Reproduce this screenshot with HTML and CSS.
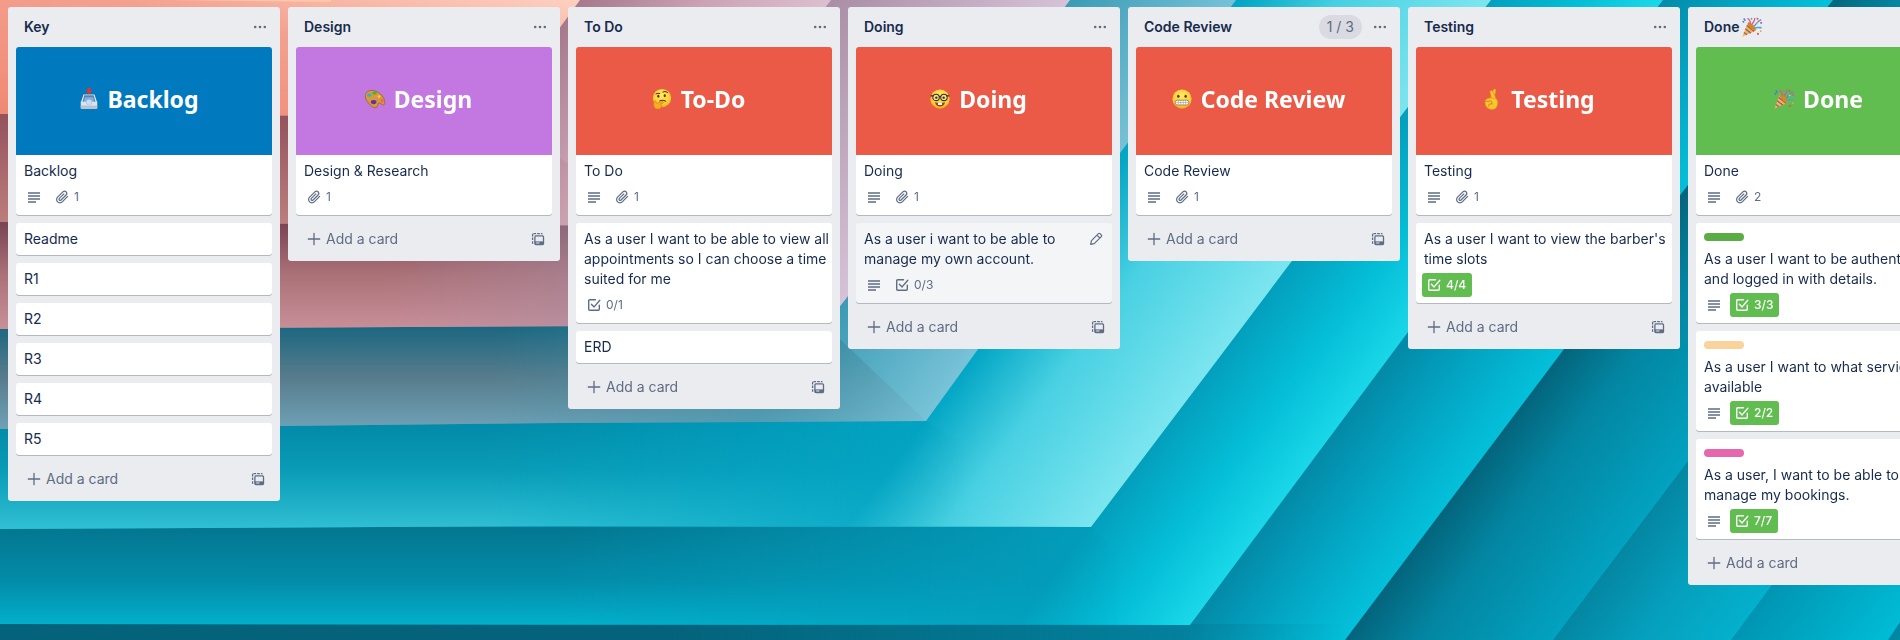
FILE: index.html
```html
<!DOCTYPE html>
<html lang="en">
<head>
<meta charset="utf-8">
<meta name="viewport" content="width=device-width, initial-scale=1">
<title>Board</title>
<link rel="stylesheet" href="styles.css">
</head>
<body>
<svg class="backdrop" viewBox="0 0 1900 640" preserveAspectRatio="xMinYMin slice" aria-hidden="true">
  <defs>
    <linearGradient id="gG" gradientUnits="userSpaceOnUse" x1="1888" y1="640" x2="1980" y2="709"><stop offset="0" stop-color="#0086a2"/><stop offset="1" stop-color="#00a6c4"/></linearGradient>
    <linearGradient id="gF" gradientUnits="userSpaceOnUse" x1="1731" y1="640" x2="1832" y2="716"><stop offset="0" stop-color="#0095b2"/><stop offset="1" stop-color="#00bcd6"/></linearGradient>
    <linearGradient id="gE" gradientUnits="userSpaceOnUse" x1="1553" y1="640" x2="1667" y2="725"><stop offset="0" stop-color="#0486a2"/><stop offset=".5" stop-color="#05a0be"/><stop offset="1" stop-color="#04b0cc"/></linearGradient>
    <linearGradient id="gD" gradientUnits="userSpaceOnUse" x1="1345" y1="640" x2="1478" y2="740"><stop offset="0" stop-color="#04647c"/><stop offset=".35" stop-color="#0385a1"/><stop offset="1" stop-color="#02a2c0"/></linearGradient>
    <linearGradient id="gC" gradientUnits="userSpaceOnUse" x1="1190" y1="625" x2="1296" y2="705"><stop offset="0" stop-color="#038aa8"/><stop offset=".5" stop-color="#03a6c4"/><stop offset="1" stop-color="#04c0da"/></linearGradient>
    <linearGradient id="gB" gradientUnits="userSpaceOnUse" x1="1091" y1="527" x2="1201" y2="610"><stop offset="0" stop-color="#039fbd"/><stop offset=".55" stop-color="#05bfd8"/><stop offset="1" stop-color="#1ad8e9"/></linearGradient>
    <linearGradient id="gA" gradientUnits="userSpaceOnUse" x1="926" y1="421" x2="1082" y2="538"><stop offset="0" stop-color="#03a6c5"/><stop offset=".4" stop-color="#48d0e2"/><stop offset="1" stop-color="#7be5ef"/></linearGradient>
    <linearGradient id="gP" gradientUnits="userSpaceOnUse" x1="825" y1="325" x2="936" y2="408"><stop offset="0" stop-color="#3a9bb4"/><stop offset="1" stop-color="#78c3d8"/></linearGradient>
    <linearGradient id="gM" gradientUnits="userSpaceOnUse" x1="660" y1="226" x2="813" y2="341"><stop offset="0" stop-color="#a98ea5"/><stop offset="1" stop-color="#d6c2d8"/></linearGradient>
    <linearGradient id="gS" gradientUnits="userSpaceOnUse" x1="495" y1="116" x2="653" y2="235"><stop offset="0" stop-color="#a67a8c"/><stop offset=".5" stop-color="#cba3b5"/><stop offset="1" stop-color="#dcbfd0"/></linearGradient>
    <linearGradient id="gI" x1="0" y1="1" x2="1" y2="0"><stop offset="0" stop-color="#f08872"/><stop offset=".6" stop-color="#f4a08f"/><stop offset="1" stop-color="#fdd0c0"/></linearGradient>

    <linearGradient id="b1" x1="0" y1="0" x2="0" y2="1"><stop offset="0" stop-color="#94525b"/><stop offset="1" stop-color="#bd7f7f"/></linearGradient>
    <linearGradient id="b2" x1="0" y1="0" x2="0" y2="1"><stop offset="0" stop-color="#7a4354"/><stop offset=".5" stop-color="#ab7278"/><stop offset="1" stop-color="#c98f99"/></linearGradient>
    <linearGradient id="b3" x1="0" y1="0" x2="0" y2="1"><stop offset="0" stop-color="#1a6680"/><stop offset=".5" stop-color="#577c8c"/><stop offset="1" stop-color="#6fa1b6"/></linearGradient>
    <linearGradient id="b4" x1="0" y1="0" x2="0" y2="1"><stop offset="0" stop-color="#0289a7"/><stop offset=".45" stop-color="#0a9bb6"/><stop offset="1" stop-color="#2fc0d4"/></linearGradient>
    <linearGradient id="b5" x1="0" y1="0" x2="0" y2="1"><stop offset="0" stop-color="#047690"/><stop offset=".55" stop-color="#038ca9"/><stop offset="1" stop-color="#02b0cc"/></linearGradient>

    <linearGradient id="fade" x1="0" y1="0" x2="1" y2="0"><stop offset=".5" stop-color="#fff"/><stop offset="1" stop-color="#000"/></linearGradient>
    <mask id="m1"><rect width="620" height="640" fill="url(#fade)"/></mask>
    <mask id="m2"><rect width="780" height="640" fill="url(#fade)"/></mask>
    <mask id="m3"><rect width="1000" height="640" fill="url(#fade)"/></mask>
    <mask id="m4"><rect width="970" height="640" fill="url(#fade)"/></mask>
    <mask id="m5"><rect width="1120" height="640" fill="url(#fade)"/></mask>
    <mask id="m6"><rect width="1345" height="640" fill="url(#fade)"/></mask>
  </defs>
  <rect width="1900" height="640" fill="url(#gG)"/>
  <path fill="url(#gF)" d="M0 0H1900V622L1888 640H0Z"/>
  <path fill="url(#gE)" d="M0 0H1900V412L1731 640H0Z"/>
  <path fill="url(#gD)" d="M0 0H1900V180L1553 640H0Z"/>
  <path fill="url(#gC)" d="M0 0H1833L1684 190L1564 349L1345 640H0Z"/>
  <path fill="#04637b" mask="url(#m6)" d="M0 624H1345V640H0Z"/>
  <path fill="url(#gB)" d="M0 0H1663L1408 332L1190 625L0 624Z"/>
  <path fill="url(#b5)" mask="url(#m5)" d="M0 527H1091L1190 625L0 624Z"/>
  <path fill="url(#gA)" d="M0 0H1491L1404 112L1240 330L1091 527L560 526L0 529Z"/>
  <path fill="url(#b4)" mask="url(#m4)" d="M0 421H926L1091 527L560 526L0 529Z"/>
  <path fill="url(#gP)" d="M0 0H1236L1120 153L926 421L560 423L0 429Z"/>
  <path fill="url(#b3)" mask="url(#m3)" d="M0 325H825L926 421L560 423L0 429Z"/>
  <path fill="url(#gM)" d="M0 0H1070L845 300L825 325L0 329Z"/>
  <path fill="url(#b2)" mask="url(#m2)" d="M0 222H662L825 325L0 329Z"/>
  <path fill="url(#gS)" d="M0 0H831L660 226L0 222Z"/>
  <path fill="url(#b1)" mask="url(#m1)" d="M0 114H495L660 226L0 222Z"/>
  <path fill="url(#gI)" d="M0 0H580L495 117L0 114Z"/>
  <path fill="#fdc9ab" d="M170 0H331V2Z"/>
</svg>

<svg class="sprite" aria-hidden="true">
  <symbol id="i-dots" viewBox="0 0 16 16"><g fill="currentColor"><circle cx="3.2" cy="8" r="1.3"/><circle cx="8" cy="8" r="1.3"/><circle cx="12.8" cy="8" r="1.3"/></g></symbol>
  <symbol id="i-plus" viewBox="0 0 16 16"><path d="M8 2.3v11.4M2.3 8h11.4" stroke="currentColor" stroke-width="1.3" stroke-linecap="round"/></symbol>
  <symbol id="i-desc" viewBox="0 0 16 16"><path d="M2 4h12M2 7h12M2 10h12M2 13h8" stroke="currentColor" stroke-width="1.3"/></symbol>
  <symbol id="i-clip" viewBox="0 0 16 16"><path d="M13.600 7.400 8.300 12.800a3.300 3.300 0 0 1-4.700 0 3.300 3.300 0 0 1 0-4.700L8.900 2.800a2.300 2.300 0 0 1 3.200 0 2.300 2.300 0 0 1 0 3.200l-5 5a1.200 1.200 0 0 1-1.700 0 1.200 1.200 0 0 1 0-1.700l4.500-4.500" fill="none" stroke="currentColor" stroke-width="1.200" stroke-linecap="round" stroke-linejoin="round"/></symbol>
  <symbol id="i-check" viewBox="0 0 16 16"><path d="M9.500 2.700H3.700a1 1 0 0 0-1 1v8.600a1 1 0 0 0 1 1h8.600a1 1 0 0 0 1-1V8.300M5.400 7.200l2.700 2.700 5.700-6.600" fill="none" stroke="currentColor" stroke-width="1.400" stroke-linecap="round" stroke-linejoin="round"/></symbol>
  <symbol id="i-template" viewBox="0 0 16 16"><g fill="none" stroke="currentColor" stroke-width="1.300"><path d="M2.600 12.800V2.600H12.500" stroke-dasharray="2.600 1.100"/><rect x="4.900" y="4.900" width="8.600" height="8.600" rx="1"/></g><path fill="currentColor" d="M4.900 10.400h8.600v3.100H4.900z"/><path fill="#ebecf0" d="M6.200 11.500h3.200v1H6.200z"/></symbol>
  <symbol id="i-pencil" viewBox="0 0 16 16"><path d="M2.700 13.300l.6-3.500 7.100-7.100a1.100 1.100 0 0 1 1.600 0l1.300 1.300a1.100 1.100 0 0 1 0 1.600l-7.100 7.100ZM9 4.200 11.800 7" fill="none" stroke="currentColor" stroke-width="1.200" stroke-linejoin="round"/></symbol>

  <symbol id="e-inbox" viewBox="0 0 24 24">
    <path d="M6 7h12l3 9H3Z" fill="#e9eff6"/><path d="M6.800 8h10.400l2.200 8H4.600Z" fill="#5583b8"/><path d="M7.500 10h9l1.500 6H6Z" fill="#86aedb"/>
    <path d="M3 15h5.500c.4 2.200 1.700 3.200 3.500 3.200s3.100-1 3.500-3.200H21v6.500a1 1 0 0 1-1 1H4a1 1 0 0 1-1-1Z" fill="#dde3ea"/><path d="M3 19h18v2.500a1 1 0 0 1-1 1H4a1 1 0 0 1-1-1Z" fill="#b9c3cf"/><circle cx="12" cy="15.500" r="3" fill="#c6def7"/>
    <path d="M10.300 0h3.400v3h2.200L12 7 8.100 3h2.200Z" fill="#e2352c"/>
  </symbol>
  <symbol id="e-palette" viewBox="0 0 24 24">
    <path d="M2 6C4 2 11 1.500 16 5c5 3.500 7.500 9 6.500 12.500-1 2.500-3.500-.5-5.500-1-2.500-.5-1.500 3-3 4.500-2.500 1.500-7-1.500-9.500-5S.5 9.500 2 6Z" fill="#d69a3a" stroke="#96621f" stroke-width=".8"/>
    <ellipse cx="5.600" cy="7.800" rx="2.300" ry="1.800" fill="#28b4d8"/><ellipse cx="11.600" cy="5.500" rx="2.400" ry="1.700" fill="#31b83e"/><ellipse cx="16.400" cy="9.300" rx="1.500" ry="1.300" fill="#e9d04a"/><ellipse cx="19.800" cy="13.800" rx="1.700" ry="2.200" fill="#ee6a4b"/><ellipse cx="10.500" cy="15.300" rx="3.100" ry="2.300" fill="#6a2f9c"/><ellipse cx="14.500" cy="13.200" rx="1.300" ry="1.100" fill="#c476e0"/>
  </symbol>
  <radialGradient id="face" cx=".5" cy=".35" r=".7"><stop offset="0" stop-color="#ffec63"/><stop offset=".7" stop-color="#fdca33"/><stop offset="1" stop-color="#e8981a"/></radialGradient>
  <symbol id="e-think" viewBox="0 0 24 24">
    <circle cx="12" cy="11" r="10" fill="url(#face)"/><ellipse cx="8" cy="9" rx="1.200" ry="1.600" fill="#5a3512"/><ellipse cx="15" cy="8.500" rx="1.200" ry="1.600" fill="#5a3512"/>
    <path d="M5.500 6.500c1-.8 2.500-1 4-.5M13 4.500c1.500-1 3.500-.8 5 .7M9.500 14.200c2-1 4.500-.9 6.500.2" fill="none" stroke="#5a3512" stroke-width="1.100" stroke-linecap="round"/>
    <path d="M4 14c1.300-.4 1.800.8 1.800 2.800l6.400-2c1.700-.4 2 1.500.6 2l-2.500.9c2.200.5 1.500 5.300-2.800 5.300C4 23 3 20.500 3 18.500 3 16.500 3 14.500 4 14Z" fill="#f7ac28" stroke="#d07b13" stroke-width=".6"/>
  </symbol>
  <symbol id="e-nerd" viewBox="0 0 24 24">
    <circle cx="12" cy="12" r="10.500" fill="url(#face)"/><g fill="#f6e6a4" stroke="#3b2b1c" stroke-width="1.200"><circle cx="7.700" cy="10.300" r="3.500"/><circle cx="16.300" cy="10.300" r="3.500"/></g><path d="M1.800 8.500h3M19.200 8.500h3M11 9.500h2" stroke="#3b2b1c" stroke-width="1.300"/><circle cx="8" cy="10.500" r="1.300" fill="#4b2b10"/><circle cx="16" cy="10.500" r="1.300" fill="#4b2b10"/><path d="M6.500 15.500c3 1.200 8 1.200 11 0-.7 3.500-3 4.700-5.500 4.700s-4.800-1.200-5.500-4.700Z" fill="#8a4a18"/><path d="M9.800 16.200h4.400v2.300H9.800Z" fill="#fff"/>
  </symbol>
  <symbol id="e-grimace" viewBox="0 0 24 24">
    <circle cx="12" cy="12" r="10.500" fill="url(#face)"/><ellipse cx="8" cy="9" rx="1.300" ry="1.700" fill="#5a3512"/><ellipse cx="16" cy="9" rx="1.300" ry="1.700" fill="#5a3512"/><rect x="4.500" y="13.300" width="15" height="5.200" rx="2.400" fill="#fff" stroke="#8c7a66" stroke-width=".9"/><path d="M5 15.900h14M8 13.500v4.800M10.700 13.500v4.800M13.300 13.500v4.800M16 13.500v4.800" stroke="#9c9285" stroke-width=".6"/>
  </symbol>
  <symbol id="e-fingers" viewBox="0 0 24 24">
    <g fill="#fcc52f" stroke="#d8901a" stroke-width=".7"><path d="M9.500 13 13.500 2c.6-1.600 3-1 2.700.7L14 13Z"/><path d="M12 13 9.800 4.300c-.3-1.700 2.100-2.400 2.800-.8L17 12.500Z"/><path d="M5.500 12.500c2-1.700 5-1.700 8.500-1.200 3.500.4 4.500 2 4.300 5-.2 4-2.300 7.200-6.300 7.200-4.500 0-7-3-7.500-6.500-.2-2 0-3.500 1-4.500Z"/><path d="M5 15.200c1-1.300 2.800-1 3.300.3M8.300 14.500c.9-1 2.600-.8 3 .5l1 2.500c-2.300-.7-4 .5-4.300 2.500" fill="none" stroke-width="1.100"/></g>
  </symbol>
  <symbol id="e-party" viewBox="0 0 24 24">
    <path d="M1.500 22.500 7.500 7c3 1.500 7 5.500 8.500 9Z" fill="#f5bd2e"/><path d="M3.200 18l3.400 2.400M4.700 14l6 4.700M6.300 10.200l8 6.600" stroke="#9a55b8" stroke-width="1.500"/><ellipse cx="11.800" cy="11.500" rx="2.300" ry="6" transform="rotate(-43 11.800 11.500)" fill="#d38a18"/>
    <path d="M10 9C11 6 9 4 7 2.500M12.500 9c.5-3.500 3-3 2.500-7" fill="none" stroke="#d655a5" stroke-width="1.400"/><path d="M14.500 11c3-3.500 3.500-5.500 7.500-7" fill="none" stroke="#4a8fdc" stroke-width="1.500"/><path d="M15 13.500c2.500-2 4.500-.2 7.500-1" fill="none" stroke="#3fa6e8" stroke-width="1.700"/><path d="M3 2.500l1.800 2.700M1.800 5.500l1.500 1.700" stroke="#4a78d8" stroke-width="1.500"/><circle cx="18" cy="3" r="1.100" fill="#e8524a"/><circle cx="22" cy="7.500" r="1.100" fill="#d655a5"/><circle cx="11.500" cy="3" r="1" fill="#59b84a"/><circle cx="18.500" cy="19.500" r="1.100" fill="#e8524a"/><circle cx="21.500" cy="16.500" r="1" fill="#f2a33a"/><circle cx="18" cy="8" r="1" fill="#f5cf3c"/>
  </symbol>
</svg>

<main class="board">
  <section class="list">
    <header class="list-header"><h2>Key</h2><button class="icon-button" aria-label="List actions"><svg class="icon"><use href="#i-dots"/></svg></button></header>
    <ul class="cards">
      <li class="card">
        <div class="cover blue"><svg class="emoji"><use href="#e-inbox"/></svg><span>Backlog</span></div>
        <div class="card-body"><p class="title">Backlog</p>
          <div class="badges"><span class="badge"><svg class="icon"><use href="#i-desc"/></svg></span><span class="badge"><svg class="icon"><use href="#i-clip"/></svg><span>1</span></span></div></div>
      </li>
      <li class="card"><div class="card-body"><p class="title">Readme</p></div></li>
      <li class="card"><div class="card-body"><p class="title">R1</p></div></li>
      <li class="card"><div class="card-body"><p class="title">R2</p></div></li>
      <li class="card"><div class="card-body"><p class="title">R3</p></div></li>
      <li class="card"><div class="card-body"><p class="title">R4</p></div></li>
      <li class="card"><div class="card-body"><p class="title">R5</p></div></li>
    </ul>
    <footer class="list-footer"><button class="add"><svg class="icon"><use href="#i-plus"/></svg>Add a card</button><button class="icon-button" aria-label="Create from template"><svg class="icon"><use href="#i-template"/></svg></button></footer>
  </section>

  <section class="list">
    <header class="list-header"><h2>Design</h2><button class="icon-button" aria-label="List actions"><svg class="icon"><use href="#i-dots"/></svg></button></header>
    <ul class="cards">
      <li class="card">
        <div class="cover purple"><svg class="emoji"><use href="#e-palette"/></svg><span>Design</span></div>
        <div class="card-body"><p class="title">Design &amp; Research</p>
          <div class="badges"><span class="badge"><svg class="icon"><use href="#i-clip"/></svg><span>1</span></span></div></div>
      </li>
    </ul>
    <footer class="list-footer"><button class="add"><svg class="icon"><use href="#i-plus"/></svg>Add a card</button><button class="icon-button" aria-label="Create from template"><svg class="icon"><use href="#i-template"/></svg></button></footer>
  </section>

  <section class="list">
    <header class="list-header"><h2>To Do</h2><button class="icon-button" aria-label="List actions"><svg class="icon"><use href="#i-dots"/></svg></button></header>
    <ul class="cards">
      <li class="card">
        <div class="cover red"><svg class="emoji"><use href="#e-think"/></svg><span>To-Do</span></div>
        <div class="card-body"><p class="title">To Do</p>
          <div class="badges"><span class="badge"><svg class="icon"><use href="#i-desc"/></svg></span><span class="badge"><svg class="icon"><use href="#i-clip"/></svg><span>1</span></span></div></div>
      </li>
      <li class="card"><div class="card-body"><p class="title">As a user I want to be able to view all appointments so I can choose a time suited for me</p>
        <div class="badges"><span class="badge"><svg class="icon"><use href="#i-check"/></svg><span>0/1</span></span></div></div></li>
      <li class="card"><div class="card-body"><p class="title">ERD</p></div></li>
    </ul>
    <footer class="list-footer"><button class="add"><svg class="icon"><use href="#i-plus"/></svg>Add a card</button><button class="icon-button" aria-label="Create from template"><svg class="icon"><use href="#i-template"/></svg></button></footer>
  </section>

  <section class="list">
    <header class="list-header"><h2>Doing</h2><button class="icon-button" aria-label="List actions"><svg class="icon"><use href="#i-dots"/></svg></button></header>
    <ul class="cards">
      <li class="card">
        <div class="cover red"><svg class="emoji"><use href="#e-nerd"/></svg><span>Doing</span></div>
        <div class="card-body"><p class="title">Doing</p>
          <div class="badges"><span class="badge"><svg class="icon"><use href="#i-desc"/></svg></span><span class="badge"><svg class="icon"><use href="#i-clip"/></svg><span>1</span></span></div></div>
      </li>
      <li class="card hovered"><button class="edit" aria-label="Edit card"><svg class="icon"><use href="#i-pencil"/></svg></button>
        <div class="card-body"><p class="title">As a user i want to be able to manage my own account.</p>
        <div class="badges"><span class="badge"><svg class="icon"><use href="#i-desc"/></svg></span><span class="badge"><svg class="icon"><use href="#i-check"/></svg><span>0/3</span></span></div></div></li>
    </ul>
    <footer class="list-footer"><button class="add"><svg class="icon"><use href="#i-plus"/></svg>Add a card</button><button class="icon-button" aria-label="Create from template"><svg class="icon"><use href="#i-template"/></svg></button></footer>
  </section>

  <section class="list">
    <header class="list-header"><h2>Code Review</h2><span class="limit">1 / 3</span><button class="icon-button" aria-label="List actions"><svg class="icon"><use href="#i-dots"/></svg></button></header>
    <ul class="cards">
      <li class="card">
        <div class="cover red"><svg class="emoji"><use href="#e-grimace"/></svg><span>Code Review</span></div>
        <div class="card-body"><p class="title">Code Review</p>
          <div class="badges"><span class="badge"><svg class="icon"><use href="#i-desc"/></svg></span><span class="badge"><svg class="icon"><use href="#i-clip"/></svg><span>1</span></span></div></div>
      </li>
    </ul>
    <footer class="list-footer"><button class="add"><svg class="icon"><use href="#i-plus"/></svg>Add a card</button><button class="icon-button" aria-label="Create from template"><svg class="icon"><use href="#i-template"/></svg></button></footer>
  </section>

  <section class="list">
    <header class="list-header"><h2>Testing</h2><button class="icon-button" aria-label="List actions"><svg class="icon"><use href="#i-dots"/></svg></button></header>
    <ul class="cards">
      <li class="card">
        <div class="cover red"><svg class="emoji"><use href="#e-fingers"/></svg><span>Testing</span></div>
        <div class="card-body"><p class="title">Testing</p>
          <div class="badges"><span class="badge"><svg class="icon"><use href="#i-desc"/></svg></span><span class="badge"><svg class="icon"><use href="#i-clip"/></svg><span>1</span></span></div></div>
      </li>
      <li class="card"><div class="card-body"><p class="title">As a user I want to view the barber's time slots</p>
        <div class="badges"><span class="badge complete"><svg class="icon"><use href="#i-check"/></svg><span>4/4</span></span></div></div></li>
    </ul>
    <footer class="list-footer"><button class="add"><svg class="icon"><use href="#i-plus"/></svg>Add a card</button><button class="icon-button" aria-label="Create from template"><svg class="icon"><use href="#i-template"/></svg></button></footer>
  </section>

  <section class="list">
    <header class="list-header"><h2>Done <svg class="emoji"><use href="#e-party"/></svg></h2><button class="icon-button" aria-label="List actions"><svg class="icon"><use href="#i-dots"/></svg></button></header>
    <ul class="cards">
      <li class="card">
        <div class="cover green"><svg class="emoji"><use href="#e-party"/></svg><span>Done</span></div>
        <div class="card-body"><p class="title">Done</p>
          <div class="badges"><span class="badge"><svg class="icon"><use href="#i-desc"/></svg></span><span class="badge"><svg class="icon"><use href="#i-clip"/></svg><span>2</span></span></div></div>
      </li>
      <li class="card"><div class="card-body"><span class="label label-green"></span><p class="title">As a user I want to be authenticated and logged in with details.</p>
        <div class="badges"><span class="badge"><svg class="icon"><use href="#i-desc"/></svg></span><span class="badge complete"><svg class="icon"><use href="#i-check"/></svg><span>3/3</span></span></div></div></li>
      <li class="card"><div class="card-body"><span class="label label-orange"></span><p class="title">As a user I want to what services is available</p>
        <div class="badges"><span class="badge"><svg class="icon"><use href="#i-desc"/></svg></span><span class="badge complete"><svg class="icon"><use href="#i-check"/></svg><span>2/2</span></span></div></div></li>
      <li class="card"><div class="card-body"><span class="label label-pink"></span><p class="title">As a user, I want to be able to manage my bookings.</p>
        <div class="badges"><span class="badge"><svg class="icon"><use href="#i-desc"/></svg></span><span class="badge complete"><svg class="icon"><use href="#i-check"/></svg><span>7/7</span></span></div></div></li>
    </ul>
    <footer class="list-footer"><button class="add"><svg class="icon"><use href="#i-plus"/></svg>Add a card</button><button class="icon-button" aria-label="Create from template"><svg class="icon"><use href="#i-template"/></svg></button></footer>
  </section>
</main>
</body>
</html>
```
FILE: styles.css
```css
* { box-sizing: border-box; }

body {
  margin: 0;
  min-height: 100vh;
  overflow: hidden;
  font-family: Inter, "Liberation Sans", sans-serif;
  font-size: 14px;
  line-height: 20px;
  color: #172b4d;
}

h2, p, ul { margin: 0; padding: 0; }
ul { list-style: none; }
button {
  border: 0;
  padding: 0;
  background: none;
  font: inherit;
  color: #5e6c84;
  cursor: pointer;
}

.backdrop {
  position: fixed;
  inset: 0;
  width: 100%;
  height: 100%;
  z-index: -1;
}
.sprite { position: absolute; width: 0; height: 0; }
.icon { display: block; flex: none; width: 16px; height: 16px; }
.emoji { flex: none; width: 22px; height: 22px; }

.board {
  display: flex;
  align-items: flex-start;
  gap: 8px;
  height: 100vh;
  padding: 7px 8px 8px;
  overflow-x: auto;
  scrollbar-width: none;
}

.list {
  flex: 0 0 272px;
  background: #ebecf0;
  border-radius: 3px;
}
.list-header {
  display: flex;
  align-items: center;
  height: 40px;
  padding: 0 8px 0 16px;
}
.list-header h2 {
  flex: 1;
  display: flex;
  align-items: center;
  gap: 2px;
  font-size: 14px;
  font-weight: 600;
}
.limit {
  margin-right: 6px;
  padding: 2px 8px;
  border-radius: 12px;
  background: #dadbe2;
  color: #5e6c84;
}
.icon-button {
  display: grid;
  place-items: center;
  width: 24px;
  height: 28px;
}

.cards {
  display: grid;
  gap: 8px;
  padding: 0 8px;
}
.card {
  position: relative;
  background: #fff;
  border-radius: 3px;
  box-shadow: 0 1px 0 #091e4240;
}
.card.hovered { background: #f4f5f7; }
.edit {
  position: absolute;
  top: 2px;
  right: 2px;
  display: grid;
  place-items: center;
  width: 28px;
  height: 28px;
}

.cover {
  display: flex;
  align-items: center;
  justify-content: center;
  gap: 8px;
  height: 108px;
  padding: 0 12px 4px 0;
  border-radius: 3px 3px 0 0;
  color: #fff;
  font-family: "Noto Sans", "Open Sans", sans-serif;
  font-size: 23px;
  font-weight: 700;
}
.blue { background: #0079bf; }
.purple { background: #c377e0; }
.red { background: #eb5a46; }
.green { background: #61bd4f; }

.card-body { padding: 6px 2px 6px 8px; }
.label {
  display: block;
  width: 40px;
  height: 8px;
  margin: 4px 0 8px;
  border-radius: 4px;
}
.label-green { background: #5aac44; }
.label-orange { background: #fad29c; }
.label-pink { background: #e568af; }

.badges {
  display: flex;
  gap: 4px;
  margin: 4px -2px 0;
}
.badge {
  display: flex;
  align-items: center;
  gap: 4px;
  height: 24px;
  padding: 0 4px;
  border-radius: 3px;
  font-size: 12px;
  color: #5e6c84;
}
.badge.complete { padding-right: 6px; background: #61bd4f; color: #fff; font-weight: 500; }

.list-footer {
  display: flex;
  justify-content: space-between;
  padding: 10px 10px 8px 18px;
}
.add {
  display: flex;
  align-items: center;
  gap: 4px;
  height: 28px;
}
```
